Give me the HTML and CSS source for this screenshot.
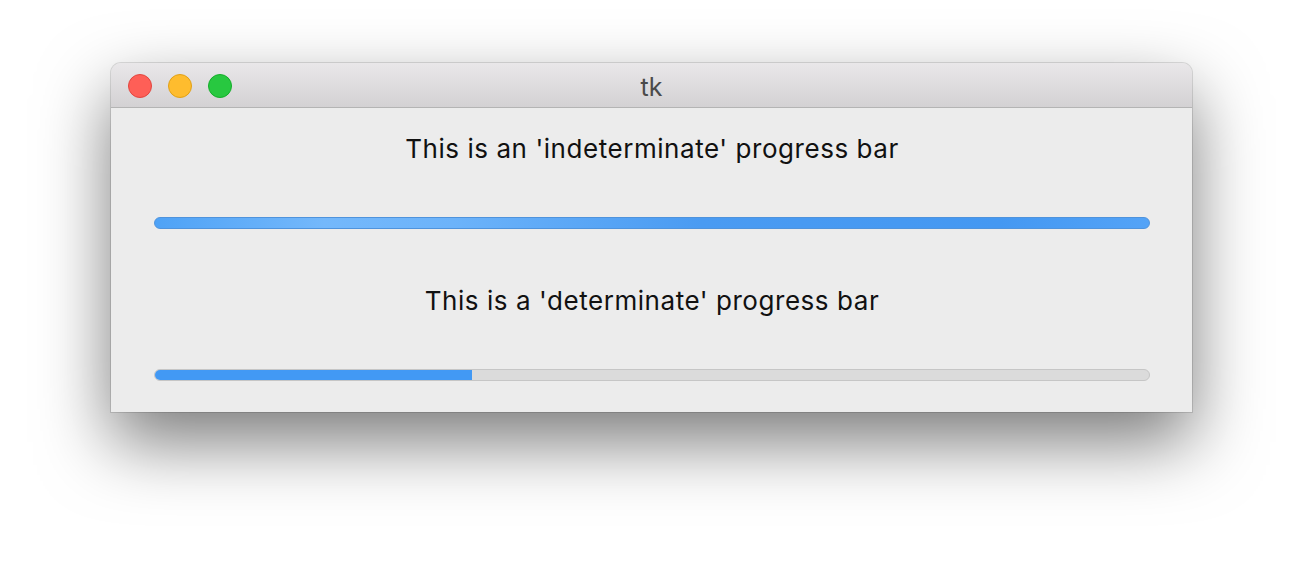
FILE: index.html
```html
<!DOCTYPE html>
<html>
<head>
<meta charset="utf-8">
<link rel="stylesheet" href="styles.css">
</head>
<body>
<div class="window">
  <div class="titlebar">
    <div class="lights">
      <span class="light red"></span>
      <span class="light yellow"></span>
      <span class="light green"></span>
    </div>
    <div class="title">tk</div>
  </div>
  <div class="content">
    <div class="label">This is an 'indeterminate' progress bar</div>
    <div class="bar indeterminate"></div>
    <div class="label second">This is a 'determinate' progress bar</div>
    <div class="bar determinate"><div class="fill" style="width:32%"></div></div>
  </div>
</div>
</body>
</html>
```
FILE: styles.css
```css
html, body {
  margin: 0;
  padding: 0;
  background: #ffffff;
}
body {
  padding-top: 63px;
  min-height: 572px;
  box-sizing: border-box;
  font-family: Inter, "Open Sans", "Liberation Sans", sans-serif;
}
.window {
  margin-left: 111px;
  width: 1081px;
  border-radius: 10px 10px 0 0;
  background: #ececec;
  box-shadow: 0 0 0 1px rgba(0,0,0,0.12), 0 30px 70px rgba(0,0,0,0.52);
  overflow: hidden;
}
.titlebar {
  position: relative;
  height: 45px;
  background: linear-gradient(#e9e7e9, #d3d1d3);
  border-bottom: 1px solid #b4b4b4;
  display: flex;
  align-items: center;
  justify-content: center;
  box-sizing: border-box;
  padding-top: 3px;
}
.lights {
  position: absolute;
  left: 17px;
  top: 11px;
  display: flex;
  gap: 16px;
}
.light {
  width: 22px;
  height: 22px;
  border-radius: 50%;
  display: block;
}
.red { background: #fe5f57; border: 1px solid #e2463f; }
.yellow { background: #febc2e; border: 1px solid #e1a116; }
.green { background: #28c840; border: 1px solid #14ae2a; }
.title {
  font-size: 25px;
  color: #4a4a4a;
  line-height: 30px;
}
.content {
  padding: 26px 42px 31px 43px;
  display: flex;
  flex-direction: column;
}
.label {
  font-size: 26px;
  letter-spacing: 0.55px;
  line-height: 30px;
  text-align: center;
  color: #111;
  margin-bottom: 53px;
}
.label.second {
  margin-top: 57px;
}
.bar {
  height: 12px;
  border-radius: 6px;
  box-sizing: border-box;
  overflow: hidden;
}
.indeterminate {
  background: linear-gradient(90deg, #4ea2f6 0%, #74b8fb 17%, #6cb3fa 30%, #4a9bf2 55%, #4498f2 85%, #53a3f7 100%);
  border: 1px solid #4f93dc;
}
.determinate {
  background: #dbdbdb;
  border: 1px solid #c6c6c6;
  position: relative;
}
.fill {
  background: #4299f4;
  margin: -1px 0 0 -1px;
  height: 12px;
  border: 1px solid #3b8ce3;
  border-right: none;
  box-sizing: border-box;
}
```
